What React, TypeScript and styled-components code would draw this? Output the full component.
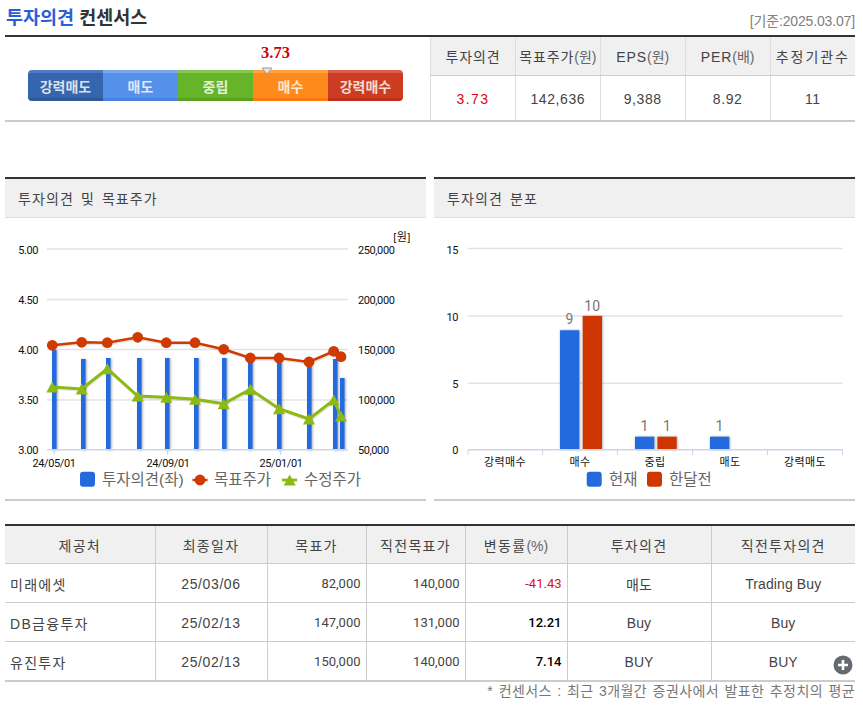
import React from "react";
import styled, { createGlobalStyle } from "styled-components";

const KR = `"Liberation Sans", "Noto Sans CJK KR", sans-serif`;
const UI = `Roboto, "Noto Sans CJK KR", sans-serif`;

const Global = createGlobalStyle`
  html, body { margin: 0; padding: 0; background: #fff; }
  body { font-family: ${KR}; color: #333; }
`;

const Page = styled.div`
  width: 850px;
  height: 711px;
  padding-left: 5px;
  overflow: hidden;
`;
const TitleRow = styled.div`
  height: 35px;
  display: flex;
  align-items: center;
  justify-content: space-between;
  margin-left: 1px;
`;
const Title = styled.h1`
  margin: 0 0 4px;
  font-size: 18.5px;
  font-weight: 700;
  color: #333;
  span { color: #2b5ed6; }
`;
const DateText = styled.span`
  font-size: 14px;
  color: #808080;
  letter-spacing: -0.15px;
  padding-top: 5px;
`;
const Summary = styled.section`
  display: flex;
  height: 83px;
  border-top: 2px solid #333;
  border-bottom: 2px solid #ccc;
`;
const GaugeWrap = styled.div`
  width: 425px;
  padding: 33px 0 0 23px;
  box-sizing: border-box;
`;
const Gauge = styled.div`
  position: relative;
  display: flex;
  width: 375px;
  height: 31px;
`;
const Segment = styled.div<{ $main: string; $top: string; $bottom: string; $edge?: string }>`
  width: 75px;
  height: 31px;
  box-sizing: border-box;
  display: flex;
  align-items: center;
  justify-content: center;
  font-size: 14px;
  font-weight: 700;
  color: rgba(255, 255, 255, 0.82);
  background: ${(p) => p.$main};
  border-top: 3px solid ${(p) => p.$top};
  border-bottom: 3px solid ${(p) => p.$bottom};
  border-radius: ${(p) => p.$edge || "0"};
`;
const Score = styled.b`
  position: absolute;
  left: 233px;
  top: -27px;
  font-family: "Liberation Serif", serif;
  font-size: 16.5px;
  color: #cc0000;
`;
const Marker = styled.svg`
  position: absolute;
  left: 233px;
  top: -3px;
`;
const SummaryTable = styled.table`
  width: 425px;
  height: 83px;
  border-collapse: collapse;
  table-layout: fixed;
  th, td {
    border-left: 1px solid #ddd;
    padding: 0;
    text-align: center;
    font-size: 14px;
    font-weight: 400;
    color: #444;
    white-space: nowrap;
    overflow: hidden;
  }
  th {
    height: 38px;
    background: #f0f0f0;
    border-bottom: 1px solid #ccc;
    letter-spacing: 0.9px;
  }
  td { letter-spacing: 0.6px; padding-top: 2px; }
`;
const Red = styled.span`
  color: #e00010;
  letter-spacing: 1.4px;
`;
const Unit = styled.span`
  color: #666;
  letter-spacing: 0;
`;
const Spread = styled.span`
  letter-spacing: 1.9px;
`;
const Charts = styled.section`
  display: flex;
  gap: 8px;
  margin-top: 55px;
`;
const Panel = styled.div`
  width: 421px;
  height: 324px;
  box-sizing: border-box;
  border-top: 2px solid #333;
  border-bottom: 2px solid #ccc;
  svg { display: block; }
`;
const PanelHead = styled.h2`
  margin: 0;
  height: 38px;
  padding-left: 13px;
  display: flex;
  align-items: center;
  background: #f0f0f0;
  border-bottom: 1px solid #ddd;
  font-size: 14px;
  font-weight: 400;
  letter-spacing: 1.1px;
  word-spacing: 2px;
  color: #444;
`;
const AxisText = styled.text`
  font-family: ${UI};
  font-size: 11px;
  letter-spacing: -0.4px;
  fill: #111;
`;
const CategoryText = styled.text`
  font-family: ${KR};
  font-size: 11px;
  letter-spacing: 0.4px;
  text-anchor: middle;
  fill: #111;
`;
const LegendText = styled.text`
  font-family: ${KR};
  font-size: 15.5px;
  fill: #666;
`;
const DataLabel = styled.text`
  font-family: ${UI};
  font-size: 14px;
  fill: #777;
  text-anchor: middle;
`;
const Broker = styled.section`
  position: relative;
  margin-top: 23px;
`;
const BrokerTable = styled.table`
  width: 850px;
  border-collapse: collapse;
  table-layout: fixed;
  border-top: 2px solid #333;
  border-bottom: 2px solid #ccc;
  th, td {
    padding: 0;
    text-align: center;
    font-size: 14px;
    font-weight: 400;
    color: #444;
    border-left: 1px solid #ccc;
    border-bottom: 1px solid #ccc;
    white-space: nowrap;
  }
  th:first-child, td:first-child { border-left: 0; }
  tr:last-child td { border-bottom: 0; }
  th { background: #f0f0f0; height: 37px; letter-spacing: 1.3px; }
  td { height: 37px; padding-top: 1px; letter-spacing: 0.6px; }
`;
const NameCell = styled.td`
  && { text-align: left; padding-left: 5px; letter-spacing: 1.3px; }
`;
const OpinionCell = styled.td`
  && { letter-spacing: 0.1px; }
`;
const NumCell = styled.td<{ $tone?: "plain" | "bold" | "down" }>`
  && {
    font-family: ${UI};
    font-size: 13px;
    letter-spacing: 0;
    text-align: right;
    padding-right: 5px;
    font-weight: ${(p) => (p.$tone === "bold" ? 500 : 400)};
    color: ${(p) => (p.$tone === "down" ? "#dd1111" : p.$tone === "bold" ? "#000" : "#444")};
  }
`;
const More = styled.svg`
  position: absolute;
  right: 2px;
  bottom: 7px;
`;
const Note = styled.p`
  margin: 1px 0 0;
  text-align: right;
  font-size: 14px;
  line-height: 17px;
  color: #777;
  letter-spacing: 0.4px;
  word-spacing: 1.2px;
`;

const segments = [
  { label: "강력매도", main: "#3565ac", top: "#4c7cbf", bottom: "#2d5a96", edge: "4px 0 0 4px" },
  { label: "매도", main: "#5590ea", top: "#79a6ec", bottom: "#4a80e2" },
  { label: "중립", main: "#66b428", top: "#87c552", bottom: "#58a11f" },
  { label: "매수", main: "#ff8a1c", top: "#ffa13e", bottom: "#ff7610" },
  { label: "강력매수", main: "#cc3c22", top: "#d95f48", bottom: "#c03018", edge: "0 4px 4px 0" },
];

const barsX = [52, 81, 106, 137, 165, 194, 222, 248, 277, 307, 333, 340];
const barsTop = [350, 359, 358, 358, 358, 358, 358, 358, 358, 358, 359, 378];
const lineX = [52.3, 81.7, 107.3, 137.7, 166.3, 195, 223.7, 250.3, 279, 309, 333.7, 341];
const target = [345.3, 342.3, 342.7, 337.3, 342.7, 342.7, 349.3, 358, 358, 362, 351.3, 356.7];
const revised = [387, 389, 368.7, 396, 397.3, 399.3, 403.7, 389.3, 408.7, 419, 400, 416];

const tri = (x: number, y: number, w = 6, h = 5.5) =>
  `${x},${y - h} ${x + w},${y + h} ${x - w},${y + h}`;

function OpinionChart() {
  return (
    <svg width="421" height="281" viewBox="5 218 421 281">
      <defs>
        <filter id="op-shadow" x="-60%" y="-10%" width="220%" height="120%">
          <feDropShadow dx="1" dy="0.5" stdDeviation="1" floodColor="#000" floodOpacity="0.35" />
        </filter>
      </defs>
      {[249, 299.5, 349.5, 400].map((y) => (
        <line key={y} x1="47" x2="348" y1={y} y2={y} stroke="#e3e3e3" strokeWidth="1.6" />
      ))}
      {[
        ["5.00", "250,000", 254],
        ["4.50", "200,000", 304],
        ["4.00", "150,000", 354],
        ["3.50", "100,000", 404],
        ["3.00", "50,000", 454],
      ].map(([l, r, y]) => (
        <g key={l as string}>
          <AxisText x="38" y={y as number} textAnchor="end">{l}</AxisText>
          <AxisText x="358" y={y as number}>{r}</AxisText>
        </g>
      ))}
      <CategoryText x="402" y="241">[원]</CategoryText>
      {barsX.map((x, i) => (
        <rect key={i} x={x} y={barsTop[i]} width="4.6" height={449.5 - barsTop[i]} fill="#236ade" filter="url(#op-shadow)" />
      ))}
      <line x1="47" x2="348" y1="449.7" y2="449.7" stroke="#ccd6eb" strokeWidth="1.4" />
      {[54, 167.5, 280.5].map((x) => (
        <line key={x} x1={x} x2={x} y1="450" y2="455" stroke="#ccd6eb" />
      ))}
      <polyline points={lineX.map((x, i) => `${x + 0.7},${target[i] + 1}`).join(" ")} fill="none" stroke="#000" strokeOpacity="0.1" strokeWidth="3.4" />
      <polyline points={lineX.map((x, i) => `${x},${target[i]}`).join(" ")} fill="none" stroke="#cf3a00" strokeWidth="2.6" />
      {lineX.map((x, i) => (
        <circle key={i} cx={x} cy={target[i]} r="5.4" fill="#cf3a00" />
      ))}
      <polyline points={lineX.map((x, i) => `${x + 0.7},${revised[i] + 1}`).join(" ")} fill="none" stroke="#000" strokeOpacity="0.1" strokeWidth="3.6" />
      <polyline points={lineX.map((x, i) => `${x},${revised[i]}`).join(" ")} fill="none" stroke="#8cba12" strokeWidth="3" />
      {lineX.map((x, i) => (
        <polygon key={i} points={tri(x, revised[i])} fill="#8cba12" />
      ))}
      <AxisText x="54" y="467" textAnchor="middle">24/05/01</AxisText>
      <AxisText x="168" y="467" textAnchor="middle">24/09/01</AxisText>
      <AxisText x="281" y="467" textAnchor="middle">25/01/01</AxisText>
      <rect x="80" y="471.7" width="15" height="15" rx="3" fill="#236ade" />
      <LegendText x="102" y="485">투자의견(좌)</LegendText>
      <line x1="192.5" x2="207.5" y1="480" y2="480" stroke="#cf3a00" strokeWidth="2.4" />
      <circle cx="200" cy="480" r="5.4" fill="#cf3a00" />
      <LegendText x="214" y="485">목표주가</LegendText>
      <line x1="282" x2="297" y1="480" y2="480" stroke="#8cba12" strokeWidth="2.8" />
      <polygon points={tri(289.7, 480)} fill="#8cba12" />
      <LegendText x="304" y="485">수정주가</LegendText>
    </svg>
  );
}

const distBars = [
  { x: 560, top: 330.3, c: "#236ade", v: "9", ly: 324 },
  { x: 582.7, top: 316, c: "#cf3600", v: "10", ly: 311 },
  { x: 635, top: 436.7, c: "#236ade", v: "1", ly: 431 },
  { x: 657.4, top: 436.7, c: "#cf3600", v: "1", ly: 431 },
  { x: 710, top: 436.7, c: "#236ade", v: "1", ly: 431 },
];

function DistributionChart() {
  return (
    <svg width="421" height="281" viewBox="434 218 421 281">
      <defs>
        <filter id="dist-shadow" x="-20%" y="-10%" width="140%" height="120%">
          <feDropShadow dx="0.5" dy="0" stdDeviation="1.2" floodColor="#000" floodOpacity="0.4" />
        </filter>
      </defs>
      {[248.5, 316, 383.3].map((y) => (
        <line key={y} x1="467.7" x2="842.7" y1={y} y2={y} stroke="#e3e3e3" strokeWidth="1.4" />
      ))}
      {[["15", 254], ["10", 321], ["5", 388], ["0", 454]].map(([t, y]) => (
        <AxisText key={t as string} x="458" y={y as number} textAnchor="end">{t}</AxisText>
      ))}
      {distBars.map((b, i) => (
        <g key={i}>
          <rect x={b.x} y={b.top} width="19.3" height={449.5 - b.top} fill={b.c} filter="url(#dist-shadow)" />
          <DataLabel x={b.x + 9.5} y={b.ly}>{b.v}</DataLabel>
        </g>
      ))}
      <line x1="467.7" x2="842.7" y1="449.7" y2="449.7" stroke="#ccd6eb" strokeWidth="1.4" />
      {[468, 542.5, 617.5, 692.5, 767.5, 842.5].map((x) => (
        <line key={x} x1={x} x2={x} y1="450" y2="455" stroke="#ccd6eb" />
      ))}
      {[["강력매수", 505], ["매수", 580], ["중립", 655], ["매도", 730], ["강력매도", 805]].map(([t, x]) => (
        <CategoryText key={t as string} x={x as number} y="466">{t}</CategoryText>
      ))}
      <rect x="586.7" y="471.7" width="15" height="15" rx="3" fill="#236ade" />
      <LegendText x="609" y="485">현재</LegendText>
      <rect x="647" y="471.7" width="15" height="15" rx="3" fill="#cf3600" />
      <LegendText x="669" y="485">한달전</LegendText>
    </svg>
  );
}

const brokers = [
  ["미래에셋", "25/03/06", "82,000", "140,000", "-41.43", "매도", "Trading Buy"],
  ["DB금융투자", "25/02/13", "147,000", "131,000", "12.21", "Buy", "Buy"],
  ["유진투자", "25/02/13", "150,000", "140,000", "7.14", "BUY", "BUY"],
];

export default function App() {
  return (
    <Page>
      <Global />
      <TitleRow>
        <Title><span>투자의견</span> 컨센서스</Title>
        <DateText>[기준:2025.03.07]</DateText>
      </TitleRow>
      <Summary>
        <GaugeWrap>
          <Gauge>
            {segments.map((s) => (
              <Segment key={s.label} $main={s.main} $top={s.top} $bottom={s.bottom} $edge={s.edge}>{s.label}</Segment>
            ))}
            <Score>3.73</Score>
            <Marker width="12" height="8" viewBox="0 0 12 8">
              <polygon points="1,1 11,1 6,7" fill="#e8e8e8" stroke="#9a9a9a" strokeWidth="1" />
            </Marker>
          </Gauge>
        </GaugeWrap>
        <SummaryTable>
          <thead>
            <tr>
              <th>투자의견</th>
              <th>목표주가<Unit>(원)</Unit></th>
              <th>EPS<Unit>(원)</Unit></th>
              <th>PER<Unit>(배)</Unit></th>
              <th><Spread>추정기관수</Spread></th>
            </tr>
          </thead>
          <tbody>
            <tr>
              <td><Red>3.73</Red></td>
              <td>142,636</td>
              <td>9,388</td>
              <td>8.92</td>
              <td>11</td>
            </tr>
          </tbody>
        </SummaryTable>
      </Summary>
      <Charts>
        <Panel>
          <PanelHead>투자의견 및 목표주가</PanelHead>
          <OpinionChart />
        </Panel>
        <Panel>
          <PanelHead>투자의견 분포</PanelHead>
          <DistributionChart />
        </Panel>
      </Charts>
      <Broker>
        <BrokerTable>
          <colgroup>
            <col style={{ width: 150 }} />
            <col style={{ width: 112 }} />
            <col style={{ width: 99 }} />
            <col style={{ width: 99 }} />
            <col style={{ width: 102 }} />
            <col style={{ width: 144 }} />
            <col style={{ width: 144 }} />
          </colgroup>
          <thead>
            <tr>
              <th>제공처</th>
              <th>최종일자</th>
              <th>목표가</th>
              <th>직전목표가</th>
              <th>변동률<Unit>(%)</Unit></th>
              <th>투자의견</th>
              <th>직전투자의견</th>
            </tr>
          </thead>
          <tbody>
            {brokers.map((b) => (
              <tr key={b[0]}>
                <NameCell>{b[0]}</NameCell>
                <td>{b[1]}</td>
                <NumCell>{b[2]}</NumCell>
                <NumCell>{b[3]}</NumCell>
                <NumCell $tone={b[4].startsWith("-") ? "down" : "bold"}>{b[4]}</NumCell>
                <OpinionCell>{b[5]}</OpinionCell>
                <OpinionCell>{b[6]}</OpinionCell>
              </tr>
            ))}
          </tbody>
        </BrokerTable>
        <More width="20" height="20" viewBox="0 0 20 20">
          <circle cx="10" cy="10" r="9.5" fill="#666a70" />
          <path d="M10 5v10M5 10h10" stroke="#fff" strokeWidth="2.6" />
        </More>
      </Broker>
      <Note>* 컨센서스 : 최근 3개월간 증권사에서 발표한 추정치의 평균</Note>
    </Page>
  );
}
